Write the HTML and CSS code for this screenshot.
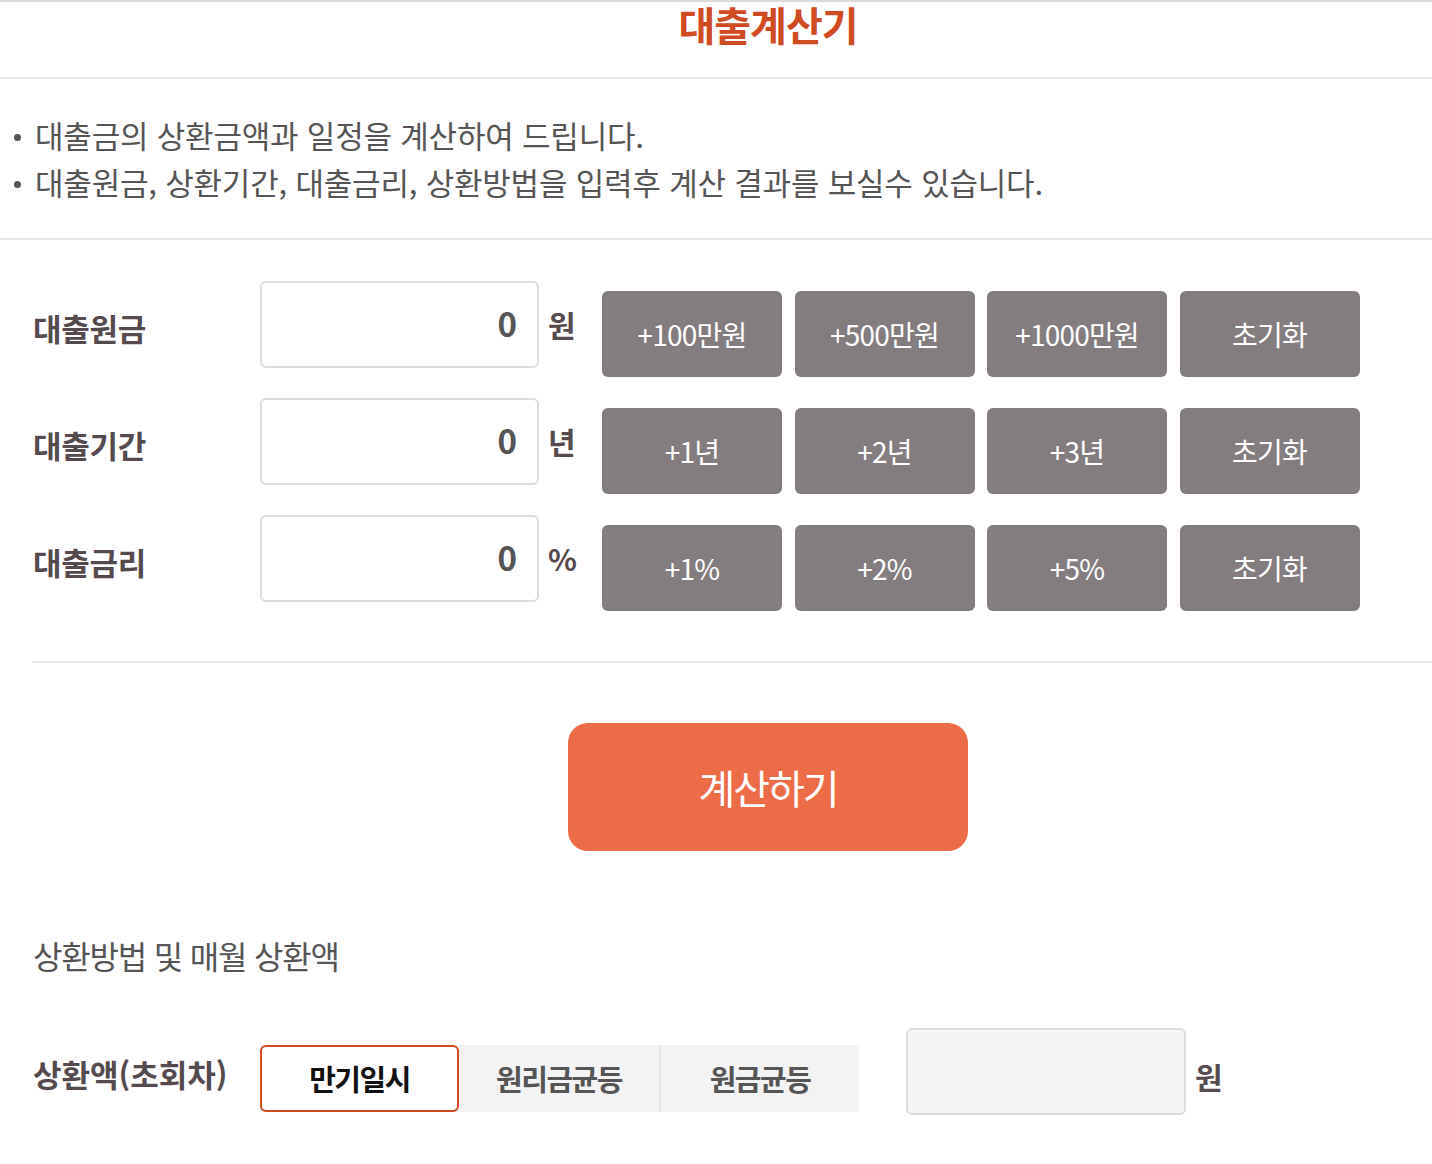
FILE: index.html
```html
<!DOCTYPE html>
<html lang="ko">
<head>
<meta charset="utf-8">
<title>대출계산기</title>
<link rel="stylesheet" href="styles.css">
</head>
<body>
<div class="page">
  <header class="title-bar">
    <h1 class="title">대출계산기</h1>
  </header>
  <section class="intro">
    <p class="bullet">대출금의 상환금액과 일정을 계산하여 드립니다.</p>
    <p class="bullet">대출원금, 상환기간, 대출금리, 상환방법을 입력후 계산 결과를 보실수 있습니다.</p>
  </section>
  <section class="form">
    <div class="row">
      <div class="label">대출원금</div>
      <div class="input">0</div>
      <div class="unit">원</div>
      <div class="btns">
        <button class="btn">+100만원</button>
        <button class="btn">+500만원</button>
        <button class="btn">+1000만원</button>
        <button class="btn">초기화</button>
      </div>
    </div>
    <div class="row">
      <div class="label">대출기간</div>
      <div class="input">0</div>
      <div class="unit">년</div>
      <div class="btns">
        <button class="btn">+1년</button>
        <button class="btn">+2년</button>
        <button class="btn">+3년</button>
        <button class="btn">초기화</button>
      </div>
    </div>
    <div class="row">
      <div class="label">대출금리</div>
      <div class="input">0</div>
      <div class="unit unit-pct">%</div>
      <div class="btns">
        <button class="btn">+1%</button>
        <button class="btn">+2%</button>
        <button class="btn">+5%</button>
        <button class="btn">초기화</button>
      </div>
    </div>
  </section>
  <div class="calc-wrap">
    <button class="calc">계산하기</button>
  </div>
  <h2 class="sub">상환방법 및 매월 상환액</h2>
  <div class="result-row">
    <div class="label">상환액(초회차)</div>
    <div class="tabs">
      <div class="tab active">만기일시</div>
      <div class="tab">원리금균등</div>
      <div class="tab">원금균등</div>
    </div>
    <div class="result-box"></div>
    <div class="unit result-unit">원</div>
  </div>
</div>
</body>
</html>
```

FILE: styles.css
```css
html, body {
  margin: 0;
  padding: 0;
  background: #fff;
}
body {
  font-family: "Noto Sans CJK KR", "Noto Sans", sans-serif;
  color: #555;
}
.page {
  width: 1432px;
}
.title-bar {
  border-top: 2px solid #dcdcdc;
  border-bottom: 2px solid #e6e6e6;
  height: 75px;
  padding-left: 104px;
  box-sizing: content-box;
}
.title {
  margin: 0;
  text-align: center;
  font-size: 40px;
  line-height: 44px;
  font-weight: 700;
  color: #d04b22;
  letter-spacing: -1px;
}
.intro {
  border-bottom: 2px solid #e6e6e6;
  padding-top: 32px;
  box-sizing: border-box;
  height: 161px;
}
.bullet {
  margin: 0;
  padding-left: 35px;
  position: relative;
  font-size: 31px;
  line-height: 47px;
  color: #555;
  letter-spacing: -0.2px;
}
.bullet::before {
  content: "";
  position: absolute;
  left: 14px;
  top: 23px;
  width: 7px;
  height: 7px;
  border-radius: 50%;
  background: #555;
}
.form {
  padding: 41px 0 60px 1px;
  border-bottom: 2px solid #e6e6e6;
  margin-left: 32px;
}
.row {
  display: flex;
  align-items: flex-start;
  height: 86px;
}
.row + .row {
  margin-top: 31px;
}
.label {
  width: 227px;
  flex: none;
  font-size: 31px;
  font-weight: 700;
  color: #554b4e;
  letter-spacing: -0.3px;
  line-height: 86px;
  padding-top: 4px;
  box-sizing: border-box;
  white-space: nowrap;
}
.input {
  width: 279px;
  height: 87px;
  box-sizing: border-box;
  border: 2px solid #dedede;
  border-radius: 6px;
  text-align: right;
  padding-right: 20px;
  font-size: 33px;
  font-weight: 700;
  color: #555;
  line-height: 80px;
  flex: none;
}
.unit {
  width: 63px;
  padding-left: 9px;
  box-sizing: border-box;
  font-size: 30px;
  font-weight: 700;
  color: #554b4e;
  line-height: 86px;
  flex: none;
}
.btns {
  display: flex;
  gap: 12.5px;
  margin-top: 10px;
}
.btn {
  width: 180px;
  height: 86px;
  border: 0;
  border-radius: 6px;
  background: #847d7f;
  color: #fff;
  font-family: inherit;
  font-size: 28px;
  letter-spacing: -0.8px;
  padding: 0;
}
.calc-wrap {
  display: flex;
  justify-content: center;
  padding-top: 60px;
  padding-left: 104px;
}
.calc {
  width: 400px;
  height: 128px;
  border: 0;
  border-radius: 20px;
  background: #ec6c48;
  color: #fff;
  font-family: inherit;
  font-size: 40px;
  letter-spacing: -2px;
  padding: 0;
}
.sub {
  margin: 80px 0 0 33px;
  font-size: 32px;
  font-weight: 400;
  color: #555;
  letter-spacing: -1.2px;
  line-height: 48px;
}
.result-row {
  display: flex;
  align-items: flex-start;
  margin: 49px 0 0 33px;
}
.result-row .label {
  line-height: 56px;
  padding-top: 18px;
  letter-spacing: 0;
}
.tabs {
  display: flex;
  margin-top: 17px;
  background: #f3f3f3;
}
.tab {
  width: 200px;
  height: 67px;
  box-sizing: border-box;
  text-align: center;
  font-size: 29px;
  font-weight: 700;
  color: #555;
  line-height: 67px;
  letter-spacing: -1.5px;
}
.tab + .tab {
  border-left: 2px solid #e6e6e6;
}
.tab.active {
  width: 199px;
  background: #fff;
  border: 2px solid #d04b22;
  border-radius: 6px;
  color: #111;
  line-height: 63px;
}
.tab.active + .tab {
  border-left: 0;
}
.result-box {
  margin-left: 47px;
  width: 280px;
  height: 87px;
  box-sizing: border-box;
  background: #f4f4f4;
  border: 2px solid #dcdcdc;
  border-radius: 6px;
  flex: none;
}
.result-unit {
  line-height: 86px;
  padding-left: 9px;
  padding-top: 5px;
}
```
